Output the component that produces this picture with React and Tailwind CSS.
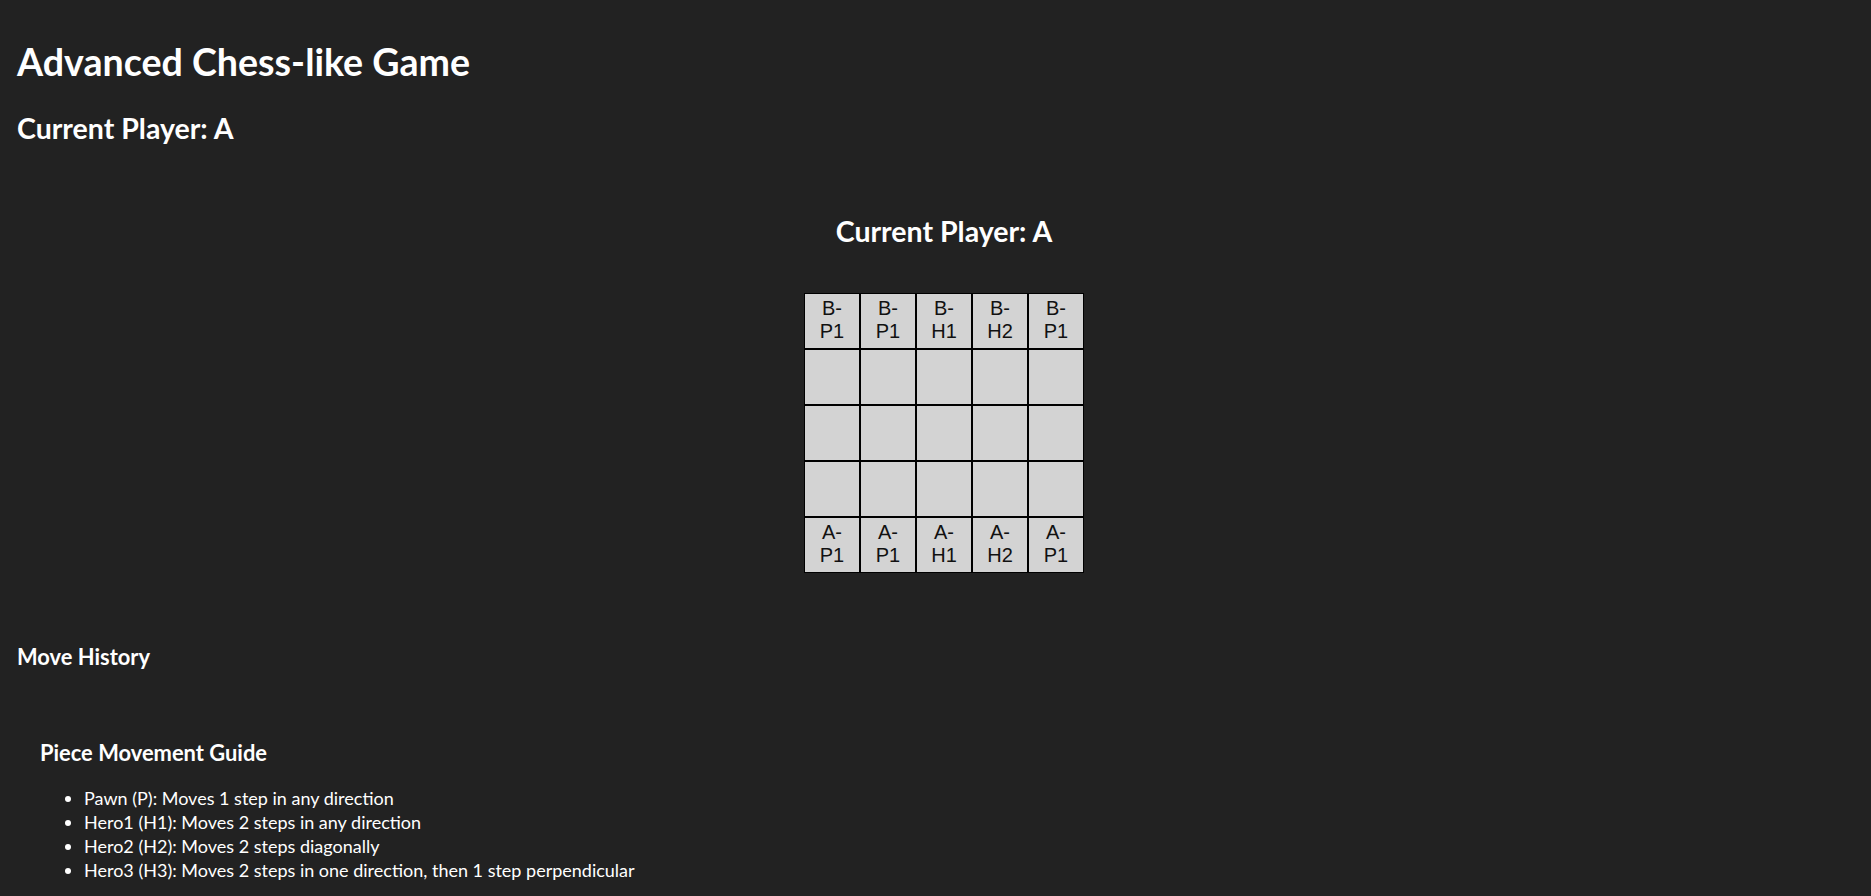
import React from "react";

const top = ["B-P1", "B-P1", "B-H1", "B-H2", "B-P1"];
const bottom = ["A-P1", "A-P1", "A-H1", "A-H2", "A-P1"];
const rows = [top, ["", "", "", "", ""], ["", "", "", "", ""], ["", "", "", "", ""], bottom];

export default function App() {
  return (
    <div className="min-h-screen bg-[#222222] text-white font-['Lato',sans-serif] pl-[17px]">
      <div className="h-[40px]" />
      <h1 className="text-[37.6px] leading-[44px] font-bold">Advanced Chess-like Game</h1>
      <h2 className="mt-[27px] text-[28.5px] leading-[34px] font-bold">Current Player: A</h2>
      <div className="flex flex-col items-center">
        <h2 className="mt-[69px] text-[28.5px] leading-[34px] font-bold">Current Player: A</h2>
        <div className="mt-[45px] grid grid-cols-[repeat(5,56px)] font-['Liberation_Sans',Arial,sans-serif] text-[#111]">
          {rows.flat().map((c, i) => (
            <div
              key={i}
              className="w-[56px] h-[56px] border border-black bg-[#d3d3d3] px-[6px] pt-[3px] text-center text-[20px] leading-[23px]"
            >
              {c}
            </div>
          ))}
        </div>
      </div>
      <h3 className="mt-[71px] text-[21.9px] leading-[26px] font-bold">Move History</h3>
      <div className="mt-[69.5px] pl-[23px]">
        <h3 className="text-[21.9px] leading-[26px] font-bold">Piece Movement Guide</h3>
        <ul className="mt-[20px] list-disc pl-[44px] text-[18px] leading-[24.3px]">
          <li>Pawn (P): Moves 1 step in any direction</li>
          <li>Hero1 (H1): Moves 2 steps in any direction</li>
          <li>Hero2 (H2): Moves 2 steps diagonally</li>
          <li>Hero3 (H3): Moves 2 steps in one direction, then 1 step perpendicular</li>
        </ul>
      </div>
    </div>
  );
}
